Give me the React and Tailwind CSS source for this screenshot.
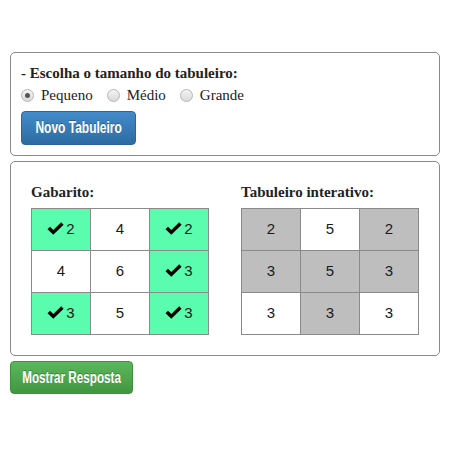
import React, { useState } from "react";

const serif = { fontFamily: '"Liberation Serif", "Times New Roman", serif' };
const narrow = { fontFamily: '"Liberation Sans", Arial, sans-serif', textShadow: "0 -1px 0 rgba(0,0,0,0.25)" };

const gabarito = [
  [{ v: 2, ok: true }, { v: 4 }, { v: 2, ok: true }],
  [{ v: 4 }, { v: 6 }, { v: 3, ok: true }],
  [{ v: 3, ok: true }, { v: 5 }, { v: 3, ok: true }],
];

const interativo = [
  [{ v: 2, on: true }, { v: 5 }, { v: 2, on: true }],
  [{ v: 3, on: true }, { v: 5, on: true }, { v: 3, on: true }],
  [{ v: 3 }, { v: 3, on: true }, { v: 3 }],
];

function Check() {
  return (
    <svg width="17" height="13" viewBox="0 0 17 13" className="inline-block mr-[2px] align-[-1px]">
      <path d="M0.5 7.2 L3 4.8 L6.3 8 L14.2 0.3 L16.6 2.7 L6.3 12.8 Z" fill="#000" />
    </svg>
  );
}

function Radio({ checked, label, onClick }) {
  return (
    <label className="flex items-center mr-[14px] cursor-pointer" onClick={onClick}>
      <span className="w-[13px] h-[13px] rounded-full border border-[#b5b5b5] bg-gradient-to-b from-[#f4f4f4] to-[#d9d9d9] flex items-center justify-center mr-[7px]">
        {checked && <span className="w-[5px] h-[5px] rounded-full bg-[#555]" />}
      </span>
      <span className="text-[15px] text-[#222]">{label}</span>
    </label>
  );
}

function Board({ rows, kind }) {
  return (
    <table className="border-collapse" style={{ fontFamily: '"Liberation Sans", Arial, sans-serif' }}>
      <tbody>
        {rows.map((row, i) => (
          <tr key={i}>
            {row.map((c, j) => {
              let bg = "bg-white";
              if (kind === "gab" && c.ok) bg = "bg-[#5afcad]";
              if (kind === "int" && c.on) bg = "bg-[#bebebe]";
              return (
                <td
                  key={j}
                  className={`${bg} border border-[#8a8a8a] w-[59px] h-[42px] p-0 text-center text-[15px] text-[#1a1a1a]`}
                >
                  {c.ok && <Check />}
                  {c.v}
                </td>
              );
            })}
          </tr>
        ))}
      </tbody>
    </table>
  );
}

export default function App() {
  const [size, setSize] = useState("Pequeno");

  return (
    <div className="bg-white w-[450px] h-[450px] px-[10px] pt-[52px]" style={serif}>
      <div className="border border-[#8a8a8a] rounded-[5px] px-[10px] pt-[10px] pb-[10px]">
        <div className="text-[15px] font-bold leading-[20px] text-[#222] mb-[2px]">
          - Escolha o tamanho do tabuleiro:
        </div>
        <div className="flex items-center leading-[20px]">
          {["Pequeno", "Médio", "Grande"].map((s) => (
            <Radio key={s} label={s} checked={size === s} onClick={() => setSize(s)} />
          ))}
        </div>
        <button
          className="mt-[6px] w-[115px] h-[34px] rounded-[4px] border border-[#2b669a] bg-gradient-to-b from-[#428bca] to-[#2d6ca2] text-white text-[16px] font-bold leading-[20px] flex items-center justify-center whitespace-nowrap"
          style={narrow}
        >
          <span className="inline-block scale-x-[0.75]">Novo Tabuleiro</span>
        </button>
      </div>

      <div className="mt-[5px] border border-[#8a8a8a] rounded-[5px] px-[20px] pt-[20px] pb-[20px] grid grid-cols-[210px_210px]">
        <div>
          <div className="text-[15px] font-bold leading-[20px] text-[#222] mb-[6px]">Gabarito:</div>
          <Board rows={gabarito} kind="gab" />
        </div>
        <div>
          <div className="text-[15px] font-bold leading-[20px] text-[#222] mb-[6px]">Tabuleiro interativo:</div>
          <Board rows={interativo} kind="int" />
        </div>
      </div>

      <button
        className="mt-[5px] w-[123px] h-[33px] rounded-[4px] border border-[#3e8f3e] bg-gradient-to-b from-[#5cb85c] to-[#419641] text-white text-[16px] font-bold leading-[20px] flex items-center justify-center whitespace-nowrap"
        style={narrow}
      >
        <span className="inline-block scale-x-[0.73]">Mostrar Resposta</span>
      </button>
    </div>
  );
}
